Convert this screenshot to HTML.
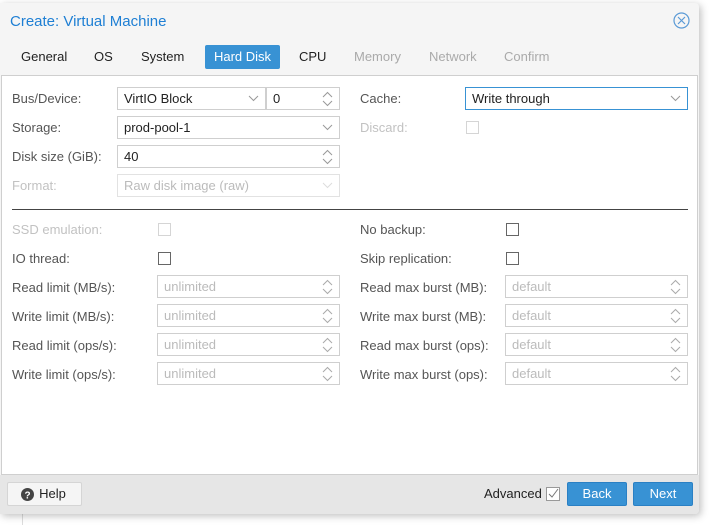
<!DOCTYPE html>
<html><head><style>
*{box-sizing:border-box;margin:0;padding:0}
body{width:709px;height:525px;background:#fff;font-family:"Liberation Sans",sans-serif;font-size:13px;color:#333;position:relative;overflow:hidden}
.bgline{position:absolute;left:22px;top:500px;width:1px;height:25px;background:#ddd}
.dlg{position:absolute;left:0;top:3px;width:699px;height:511px;background:#f5f5f5;border-radius:0 4px 4px 0;box-shadow:2px 2px 8px rgba(0,0,0,.25)}
.title{position:absolute;left:10px;top:10px;font-size:15px;color:#1e7fd4}
.close{position:absolute;left:673px;top:9px}
.tab{position:absolute;top:42px;height:24px;line-height:24px;font-size:13px;color:#222}
.tab.dis{color:#aaa}
.tab.act{background:#3892d4;color:#fff;border-radius:2px;width:75px;text-align:center}
.panel{position:absolute;left:1px;top:75px;width:697px;height:400px;background:#fff;border:1px solid #cfcfcf}
.footer{position:absolute;left:0;top:472px;width:699px;height:39px;background:#e6e6e6;border-radius:0 0 4px 0}
.lbl{position:absolute;font-size:13px;color:#555;line-height:23px}
.lbl.dis{color:#c2c2c2}
.f{position:absolute;height:23px;border:1px solid #cfcfcf;background:#fff;padding-left:6px;line-height:21px;font-size:13px;color:#222}
.f.dis{color:#bbb;border-color:#e2e2e2}
.f.ph{color:#bbb}
.arr{position:absolute;right:6px;top:4px}
.cb{position:absolute;width:13px;height:13px;border:1px solid #666;background:#fff}
.cb.dis{border-color:#d5d5d5}
.btn{position:absolute;top:479px;height:24px;border-radius:2px;line-height:22px;text-align:center;font-size:13px}
</style></head><body>
<div class="bgline"></div>
<div class="dlg">
<div class="title">Create: Virtual Machine</div>
<svg class="close" width="17" height="17" viewBox="0 0 17 17"><circle cx="8.5" cy="8.5" r="7.5" fill="none" stroke="#5a9ad6" stroke-width="1.2"/><path d="M5 5L12 12M12 5L5 12" stroke="#5a9ad6" stroke-width="1.2"/></svg>
<div class="tab" style="left:21px">General</div>
<div class="tab" style="left:94px">OS</div>
<div class="tab" style="left:141px">System</div>
<div class="tab act" style="left:205px">Hard Disk</div>
<div class="tab" style="left:299px">CPU</div>
<div class="tab dis" style="left:354px">Memory</div>
<div class="tab dis" style="left:429px">Network</div>
<div class="tab dis" style="left:504px">Confirm</div>
</div>
<div class="panel"></div>
<div class="footer" style="top:475px"></div>

<div class="lbl" style="left:12px;top:87px">Bus/Device:</div>
<div class="f" style="left:117px;top:87px;width:149px">VirtIO Block<svg class="arr" style="top:7px" width="11" height="7"><path d="M1 1L5.5 5.5L10 1" fill="none" stroke="#999"/></svg></div>
<div class="f" style="left:266px;top:87px;width:74px">0<svg class="arr" style="top:3px" width="11" height="16"><path d="M1 6L5.5 1.5L10 6M1 10L5.5 14.5L10 10" fill="none" stroke="#999"/></svg></div>
<div class="lbl" style="left:12px;top:116px">Storage:</div>
<div class="f" style="left:117px;top:116px;width:223px">prod-pool-1<svg class="arr" style="top:7px" width="11" height="7"><path d="M1 1L5.5 5.5L10 1" fill="none" stroke="#999"/></svg></div>
<div class="lbl" style="left:12px;top:145px">Disk size (GiB):</div>
<div class="f" style="left:117px;top:145px;width:223px">40<svg class="arr" style="top:3px" width="11" height="16"><path d="M1 6L5.5 1.5L10 6M1 10L5.5 14.5L10 10" fill="none" stroke="#999"/></svg></div>
<div class="lbl dis" style="left:12px;top:174px">Format:</div>
<div class="f dis" style="left:117px;top:174px;width:223px">Raw disk image (raw)<svg class="arr" style="top:7px" width="11" height="7"><path d="M1 1L5.5 5.5L10 1" fill="none" stroke="#ddd"/></svg></div>

<div class="lbl" style="left:360px;top:87px">Cache:</div>
<div class="f" style="left:465px;top:87px;width:223px;border-color:#3892d4">Write through<svg class="arr" style="top:7px" width="11" height="7"><path d="M1 1L5.5 5.5L10 1" fill="none" stroke="#999"/></svg></div>
<div class="lbl dis" style="left:360px;top:116px">Discard:</div>
<div class="cb dis" style="left:466px;top:121px"></div>

<div style="position:absolute;left:12px;top:209px;width:676px;height:1px;background:#444"></div>

<div class="lbl dis" style="left:12px;top:218px">SSD emulation:</div>
<div class="cb dis" style="left:158px;top:223px"></div>
<div class="lbl" style="left:12px;top:247px">IO thread:</div>
<div class="cb" style="left:158px;top:252px"></div>
<div class="lbl" style="left:360px;top:218px">No backup:</div>
<div class="cb" style="left:506px;top:223px"></div>
<div class="lbl" style="left:360px;top:247px">Skip replication:</div>
<div class="cb" style="left:506px;top:252px"></div>

<div class="lbl" style="left:12px;top:276px">Read limit (MB/s):</div>
<div class="lbl" style="left:12px;top:305px">Write limit (MB/s):</div>
<div class="lbl" style="left:12px;top:334px">Read limit (ops/s):</div>
<div class="lbl" style="left:12px;top:363px">Write limit (ops/s):</div>
<div class="lbl" style="left:360px;top:276px">Read max burst (MB):</div>
<div class="lbl" style="left:360px;top:305px">Write max burst (MB):</div>
<div class="lbl" style="left:360px;top:334px">Read max burst (ops):</div>
<div class="lbl" style="left:360px;top:363px">Write max burst (ops):</div>

<div class="f ph" style="left:157px;top:275px;width:183px">unlimited<svg class="arr" style="top:3px" width="11" height="16"><path d="M1 6L5.5 1.5L10 6M1 10L5.5 14.5L10 10" fill="none" stroke="#aaa"/></svg></div>
<div class="f ph" style="left:157px;top:304px;width:183px">unlimited<svg class="arr" style="top:3px" width="11" height="16"><path d="M1 6L5.5 1.5L10 6M1 10L5.5 14.5L10 10" fill="none" stroke="#aaa"/></svg></div>
<div class="f ph" style="left:157px;top:333px;width:183px">unlimited<svg class="arr" style="top:3px" width="11" height="16"><path d="M1 6L5.5 1.5L10 6M1 10L5.5 14.5L10 10" fill="none" stroke="#aaa"/></svg></div>
<div class="f ph" style="left:157px;top:362px;width:183px">unlimited<svg class="arr" style="top:3px" width="11" height="16"><path d="M1 6L5.5 1.5L10 6M1 10L5.5 14.5L10 10" fill="none" stroke="#aaa"/></svg></div>
<div class="f ph" style="left:505px;top:275px;width:183px">default<svg class="arr" style="top:3px" width="11" height="16"><path d="M1 6L5.5 1.5L10 6M1 10L5.5 14.5L10 10" fill="none" stroke="#aaa"/></svg></div>
<div class="f ph" style="left:505px;top:304px;width:183px">default<svg class="arr" style="top:3px" width="11" height="16"><path d="M1 6L5.5 1.5L10 6M1 10L5.5 14.5L10 10" fill="none" stroke="#aaa"/></svg></div>
<div class="f ph" style="left:505px;top:333px;width:183px">default<svg class="arr" style="top:3px" width="11" height="16"><path d="M1 6L5.5 1.5L10 6M1 10L5.5 14.5L10 10" fill="none" stroke="#aaa"/></svg></div>
<div class="f ph" style="left:505px;top:362px;width:183px">default<svg class="arr" style="top:3px" width="11" height="16"><path d="M1 6L5.5 1.5L10 6M1 10L5.5 14.5L10 10" fill="none" stroke="#aaa"/></svg></div>

<div class="btn" style="left:7px;top:482px;width:75px;background:#f5f5f5;border:1px solid #d5d5d5;color:#222"><svg style="position:absolute;left:13px;top:5px" width="13" height="13" viewBox="0 0 13 13"><circle cx="6.5" cy="6.5" r="6.5" fill="#444"/><text x="6.5" y="10.5" font-size="10" font-weight="bold" text-anchor="middle" fill="#fff" font-family="Liberation Sans">?</text></svg><span style="margin-left:16px">Help</span></div>
<div style="position:absolute;left:484px;top:486px;font-size:13px;color:#222">Advanced</div>
<svg style="position:absolute;left:546px;top:487px" width="14" height="14"><rect x="0.5" y="0.5" width="13" height="13" fill="#fff" stroke="#999"/><path d="M3 7L6 10L12 2" fill="none" stroke="#777"/></svg>
<div class="btn" style="left:567px;top:482px;width:60px;background:#3892d4;border:1px solid #2a80c4;color:#fff">Back</div>
<div class="btn" style="left:633px;top:482px;width:60px;background:#3892d4;border:1px solid #2a80c4;color:#fff">Next</div>
</body></html>
